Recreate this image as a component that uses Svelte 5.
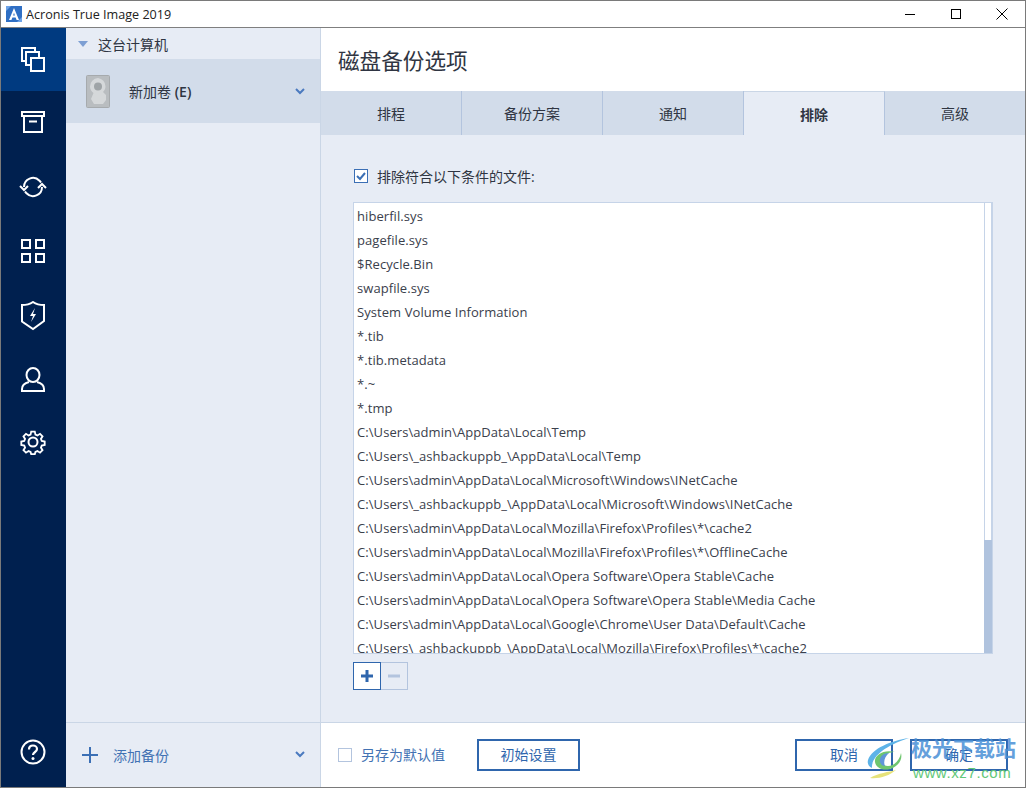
<script>
  const files = ['hiberfil.sys','pagefile.sys','$Recycle.Bin','swapfile.sys','System Volume Information','*.tib','*.tib.metadata','*.~','*.tmp',
  'C:\\Users\\admin\\AppData\\Local\\Temp','C:\\Users\\_ashbackuppb_\\AppData\\Local\\Temp','C:\\Users\\admin\\AppData\\Local\\Microsoft\\Windows\\INetCache','C:\\Users\\_ashbackuppb_\\AppData\\Local\\Microsoft\\Windows\\INetCache','C:\\Users\\admin\\AppData\\Local\\Mozilla\\Firefox\\Profiles\\*\\cache2','C:\\Users\\admin\\AppData\\Local\\Mozilla\\Firefox\\Profiles\\*\\OfflineCache','C:\\Users\\admin\\AppData\\Local\\Opera Software\\Opera Stable\\Cache','C:\\Users\\admin\\AppData\\Local\\Opera Software\\Opera Stable\\Media Cache','C:\\Users\\admin\\AppData\\Local\\Google\\Chrome\\User Data\\Default\\Cache','C:\\Users\\_ashbackuppb_\\AppData\\Local\\Mozilla\\Firefox\\Profiles\\*\\cache2'];
  const tabs = ['排程','备份方案','通知','排除','高级'];
</script>

<div class="window">
  <header class="titlebar">
    <svg class="logo" width="16" height="16" viewBox="0 0 16 16"><rect width="16" height="16" fill="#2f6fc4"/><path d="M0 0h5L0 5zM16 16h-5l5-5z" fill="#6fa3e6"/><path d="M3 14 8 2l5 12h-2.400l-1-2.600H6.400L5.400 14zM7.100 9.400h1.800L8 6.800z" fill="#fff"/></svg>
    <span class="apptitle">Acronis True Image 2019</span>
    <div class="winctl">
      <svg width="12" height="12" viewBox="0 0 12 12"><path d="M1 6.500h10" stroke="#000" fill="none"/></svg>
      <svg width="12" height="12" viewBox="0 0 12 12"><rect x="1.500" y="1.500" width="9" height="9" stroke="#000" fill="none"/></svg>
      <svg width="12" height="12" viewBox="0 0 12 12"><path d="M.5.500l11 11M11.500.500l-11 11" stroke="#000" fill="none"/></svg>
    </div>
  </header>

  <div class="body">
    <nav class="rail">
      <div class="rail-item active">
        <svg width="24" height="25" viewBox="0 0 24 25" fill="#003a80" stroke="#fff" stroke-width="2"><rect x="1" y="1" width="13" height="13"/><rect x="5" y="5" width="13" height="13"/><rect x="10" y="11" width="13" height="13"/></svg>
      </div>
      <div class="rail-item shift-up">
        <svg width="24" height="24" viewBox="0 0 24 24" fill="none" stroke="#fff" stroke-width="2"><path d="M1 2h22v4H1zM3 6v16h18V6M8 11.500h8"/></svg>
      </div>
      <div class="rail-item">
        <svg width="30" height="24" viewBox="0 0 30 24" fill="none" stroke="#fff" stroke-width="2"><path d="M6 12a9 9 0 0 1 15.500-6.300L23 7.500M24 12a9 9 0 0 1-15.500 6.300L7 16.500"/><path d="M2 11l4 4 4-4M20 13l4-4 4 4"/></svg>
      </div>
      <div class="rail-item">
        <svg width="24" height="24" viewBox="0 0 24 24" fill="none" stroke="#fff" stroke-width="2"><rect x="1" y="1" width="8" height="8"/><rect x="15" y="1" width="8" height="8"/><rect x="1" y="15" width="8" height="8"/><rect x="15" y="15" width="8" height="8"/></svg>
      </div>
      <div class="rail-item shift-down">
        <svg width="26" height="30" viewBox="0 0 26 30"><path d="M2 4c4 0 8-1 11-3 3 2 7 3 11 3v16l-11 8-11-7.500z" fill="none" stroke="#fff" stroke-width="2"/><path d="M15 7l-5 8h3l-2 6 5-8h-3l2-6z" fill="#fff"/></svg>
      </div>
      <div class="rail-item shift-down">
        <svg width="26" height="26" viewBox="0 0 26 26" fill="none" stroke="#fff" stroke-width="2"><ellipse cx="13" cy="8" rx="6.500" ry="7"/><path d="M9 15c-4 1-7 3-7 7v2h22v-2c0-4-3-6-7-7"/></svg>
      </div>
      <div class="rail-item shift-up">
        <svg width="26" height="26" viewBox="0 0 26 26" fill="none" stroke="#fff" stroke-width="2"><circle cx="13" cy="13" r="4.500"/><path d="M11 1.500h4l.7 3.300 2.200.9 2.900-1.800 2.800 2.800-1.800 2.900.9 2.200 3.300.7v3.800l-3.300.7-.9 2.200 1.800 2.900-2.800 2.800-2.900-1.800-2.200.9-.7 2.600h-4l-.7-2.600-2.200-.9-2.900 1.800-2.800-2.800 1.800-2.900-.9-2.200-3.300-.7v-3.800l3.300-.7.900-2.200-1.800-2.900 2.800-2.800 2.900 1.800 2.200-.9z" transform="translate(1.300 1.300) scale(.9)"/></svg>
      </div>
      <div class="rail-help">
        <svg width="26" height="26" viewBox="0 0 26 26"><circle cx="13" cy="13" r="11.500" fill="none" stroke="#fff" stroke-width="2"/><path d="M9 10.500c0-2.500 1.800-4 4-4s4 1.500 4 3.500c0 3-4 3-4 6" fill="none" stroke="#fff" stroke-width="2.200"/><circle cx="13" cy="19.500" r="1.500" fill="#fff"/></svg>
      </div>
    </nav>

    <aside class="side">
      <div class="side-head">
        <svg width="10" height="6" viewBox="0 0 10 6"><path d="M0 0h10L5 6z" fill="#7d9fd3"/></svg>
        <span>这台计算机</span>
      </div>
      <div class="side-row">
        <svg width="24" height="33" viewBox="0 0 24 33"><rect width="23" height="32" x=".5" y=".5" rx="1" fill="#b9bdc0" stroke="#a6aaad"/><path d="M12 3a8.500 8.500 0 0 0-8 8.500c0 3 1.500 5 3.500 6.500L5 24l3 5h9l3-4v-5l-3-3c1.500-1.500 2.500-3.500 2.500-5.500A8.500 8.500 0 0 0 12 3z" fill="#d5d8da"/><circle cx="12" cy="11.500" r="4" fill="#9fa4a7"/></svg>
        <span class="vol">新加卷 <b>(E)</b></span>
        <svg class="chev" width="10" height="7" viewBox="0 0 10 7"><path d="M1 1l4 4 4-4" fill="none" stroke="#4b7abf" stroke-width="2"/></svg>
      </div>
      <div class="side-foot">
        <svg width="16" height="16" viewBox="0 0 16 16"><path d="M8 0v16M0 8h16" stroke="#3b6fb5" stroke-width="2"/></svg>
        <span>添加备份</span>
        <svg class="chev" width="10" height="7" viewBox="0 0 10 7"><path d="M1 1l4 4 4-4" fill="none" stroke="#4b7abf" stroke-width="2"/></svg>
      </div>
    </aside>

    <main class="main">
      <h1>磁盘备份选项</h1>
      <div class="tabs">
        {#each tabs as t, i}
          <div class="tab" class:on={i === 3}>{t}</div>
        {/each}
      </div>
      <section class="content">
        <label class="check">
          <svg width="14" height="14" viewBox="0 0 14 14"><rect x=".5" y=".5" width="13" height="13" fill="#fff" stroke="#3b6fb5"/><path d="M3 7l3 3 5-6" fill="none" stroke="#3b6fb5" stroke-width="2"/></svg>
          <span>排除符合以下条件的文件:</span>
        </label>
        <div class="listbox">
          <ul>
            {#each files as f}<li>{f}</li>{/each}
          </ul>
          <div class="scroll"><div class="thumb"></div></div>
        </div>
        <div class="tools">
          <button class="tool add"><svg width="14" height="14" viewBox="0 0 14 14"><path d="M7 1v12M1 7h12" stroke="#2f66ad" stroke-width="3"/></svg></button>
          <button class="tool rem"><svg width="14" height="14" viewBox="0 0 14 14"><path d="M1 7h12" stroke="#b3c4de" stroke-width="3"/></svg></button>
        </div>
      </section>
      <footer class="foot">
        <span class="box"></span>
        <span class="savedef">另存为默认值</span>
        <button class="btn reset">初始设置</button>
        <button class="btn cancel">取消</button>
        <button class="btn ok">确定</button>
      </footer>
    </main>
  </div>

  <div class="mark">
    <svg width="44" height="41" viewBox="0 0 44 41"><path d="M42 0C24 3 5 10 1 22c-1 4 1 7 4 8-1-9 9-21 37-30z" fill="#5db3e8"/><path d="M28 14C17 11 7 17 8 24c1 6 8 9 15 7 7-2 13-8 11-16-1 7-7 13-13 13-5 0-7-4-5-8 2-4 7-6 12-6z" fill="#6fc66f"/><path d="M22 15c-6 0-10 4-9 9 1 3 3 4 5 4-2-4 0-10 4-13z" fill="#5f95d8"/><path d="M3 40c9 1 19-2 26-8-7 2-18 3-26 8z" fill="#e6e27a"/></svg>
    <div class="marktext"><strong>极光下载站</strong><em>www.xz7.com</em></div>
  </div>
</div>

<style>
  :global(body) { margin: 0; background: #fff; }
  .window { position: relative; width: 1026px; height: 788px; box-sizing: border-box; border: 1px solid #7a7a7a; display: flex; flex-direction: column; overflow: hidden; font-family: "Open Sans", "Noto Sans CJK SC", sans-serif; color: #2f3542; background: #fff; }
  .titlebar { height: 26px; flex: none; display: flex; align-items: center; border-bottom: 1px solid #7f7f7f; background: #fff; }
  .logo { margin-left: 5px; }
  .apptitle { margin-left: 4px; font-size: 12.600px; color: #222; white-space: nowrap; }
  .winctl { margin-left: auto; display: flex; gap: 34px; margin-right: 17px; }
  .body { flex: 1; display: flex; min-height: 0; }
  .rail { width: 65px; flex: none; background: #00204f; display: flex; flex-direction: column; }
  .rail-item { height: 64px; box-sizing: border-box; padding-right: 1px; display: flex; align-items: center; justify-content: center; flex: none; }
  .rail-item.active { background: #003a80; height: 63px; }
  .rail-item.shift-up { padding-bottom: 2px; }
  .rail-item.shift-down { padding-top: 2px; }
  .rail-help { margin-top: auto; height: 60px; padding-right: 1px; display: flex; align-items: center; justify-content: center; padding-bottom: 5px; }
  .side { width: 254px; flex: none; background: #e7ecf5; border-right: 1px solid #cad6e6; display: flex; flex-direction: column; }
  .side-head { height: 31px; display: flex; align-items: center; gap: 10px; padding-left: 12px; font-size: 14px; }
  .side-row { height: 64px; background: #d2dcea; display: flex; align-items: center; padding-left: 20px; position: relative; font-size: 14px; }
  .vol { margin-left: 19px; }
  .vol b { font-weight: 600; font-size: 14px; }
  .chev { position: absolute; right: 15px; }
  .side-foot { margin-top: auto; height: 65px; box-sizing: border-box; border-top: 1px solid #cad6e6; display: flex; align-items: center; padding: 0 0 1px 16px; gap: 15px; color: #4272b3; font-size: 14px; position: relative; }
  .main { flex: 1; min-width: 0; display: flex; flex-direction: column; }
  h1 { margin: 0; height: 63px; flex: none; box-sizing: border-box; padding-left: 17px; font-size: 21.600px; font-weight: 400; line-height: 66px; color: #2f3542; white-space: nowrap; }
  .tabs { display: flex; height: 44px; flex: none; background: #d2dcea; }
  .tab { flex: 1; display: flex; align-items: center; justify-content: center; font-size: 14px; border-right: 1px solid #b3c4de; }
  .tab:last-child { border-right: 0; }
  .tab.on { background: #e7ecf5; font-weight: 700; border-top: 1px solid #cad6e6; padding-top: 1px; box-sizing: border-box; }
  .content { flex: 1; background: #e7ecf5; padding: 0 32px; min-height: 0; display: flex; flex-direction: column; }
  .check { display: flex; align-items: center; gap: 9px; font-size: 14px; height: 24px; margin: 29px 0 0 1px; flex: none; }
  .listbox { margin-top: 14px; height: 452px; width: 640px; flex: none; box-sizing: border-box; border: 1px solid #c6d4e8; background: #fff; display: flex; overflow: hidden; }
  ul { list-style: none; margin: 0; padding: 1px 0 0 3px; flex: 1; min-width: 0; overflow: hidden; }
  li { height: 24px; line-height: 24px; font-size: 13px; letter-spacing: .07px; white-space: nowrap; color: #3a404c; }
  .scroll { width: 8px; flex: none; box-sizing: border-box; border: 1px solid #c6d4e8; border-width: 0 1px; position: relative; }
  .thumb { position: absolute; left: -1px; right: -1px; bottom: 0; height: 113px; background: #b0c3de; }
  .tools { display: flex; margin-top: 8px; flex: none; }
  .tool { width: 28px; height: 28px; padding: 0; box-sizing: border-box; display: flex; align-items: center; justify-content: center; }
  .add { background: #fff; border: 1px solid #2f66ad; }
  .rem { background: #e7ecf5; border: 1px solid #b3c4de; border-left: 0; width: 27px; }
  .foot { height: 65px; flex: none; box-sizing: border-box; border-top: 1px solid #cad6e6; display: flex; align-items: center; padding-left: 17px; background: #fff; position: relative; }
  .box { width: 14px; height: 14px; box-sizing: border-box; border: 1px solid #b3c4de; background: #fff; flex: none; }
  .savedef { margin-left: 9px; font-size: 14px; color: #4272b3; padding-bottom: 2px; }
  .btn { height: 32px; box-sizing: border-box; background: #fff; border: 2px solid #2f66ad; color: #2f66ad; font: inherit; font-size: 14px; padding: 0 0 2px; }
  .reset { width: 103px; margin-left: 32px; }
  .cancel { width: 98px; margin-left: auto; }
  .ok { width: 98px; margin-left: 17px; margin-right: 17px; }
  .mark { position: absolute; left: 866px; top: 737px; display: flex; pointer-events: none; }
  .marktext { display: flex; flex-direction: column; margin-left: 0; line-height: 1; white-space: nowrap; }
  .marktext strong { font-size: 21px; font-weight: 700; color: #4a90d6; opacity: .85; }
  .marktext em { font-style: normal; font-size: 15px; color: #62c878; margin-top: 6px; margin-left: 2px; font-family: "Liberation Sans", sans-serif; letter-spacing: .6px; }
</style>
